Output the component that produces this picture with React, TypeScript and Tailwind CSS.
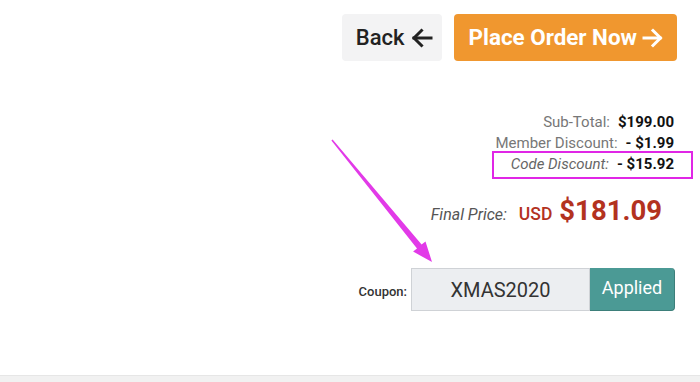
import React from "react";

function ArrowLeftIcon() {
  return (
    <svg width="22" height="20" viewBox="0 0 22 20" fill="none" stroke="currentColor" strokeWidth="3" strokeLinecap="square" strokeLinejoin="miter">
      <path d="M20 10H3" />
      <path d="M10.5 2.5L3 10l7.5 7.5" />
    </svg>
  );
}

function ArrowRightIcon() {
  return (
    <svg width="21" height="20" viewBox="0 0 21 20" fill="none" stroke="currentColor" strokeWidth="3" strokeLinecap="square" strokeLinejoin="miter">
      <path d="M2 10h16" />
      <path d="M11 2.5L18.5 10 11 17.5" />
    </svg>
  );
}

export default function App() {
  return (
    <div className="relative w-[700px] h-[382px] bg-white flex flex-col overflow-hidden" style={{ fontFamily: "Roboto, 'Liberation Sans', sans-serif" }}>
      {/* Buttons */}
      <div className="flex justify-end gap-3 pt-[14px] pr-[23px]">
        <button className="h-[47px] pl-[14px] pr-[9px] bg-[#f3f3f4] rounded-[4px] text-[22px] font-medium text-[#222] flex items-center gap-[6px]">
          <span>Back</span>
          <ArrowLeftIcon />
        </button>
        <button className="h-[47px] pl-[15px] pr-[14px] bg-[#f0972f] rounded-[4px] text-[22.4px] font-bold text-white flex items-center gap-[5px]">
          <span>Place Order Now</span>
          <ArrowRightIcon />
        </button>
      </div>

      {/* Summary */}
      <div className="mt-[51px] flex flex-col items-end pr-[26px] text-[15px] leading-[21px]">
        <div className="flex gap-2">
          <span className="text-[#777]">Sub-Total:</span>
          <span className="font-bold text-[#111]">$199.00</span>
        </div>
        <div className="flex gap-2">
          <span className="text-[#777]">Member Discount:</span>
          <span className="font-bold text-[#111]">- $1.99</span>
        </div>
        <div className="relative flex gap-2">
          <span className="italic text-[#666]">Code Discount:</span>
          <span className="font-bold text-[#111]">- $15.92</span>
          <div className="absolute left-[-19px] right-[-19px] top-[-3px] bottom-[-4px] border-2 border-[#e026e6]" />
        </div>
      </div>

      {/* Final price */}
      <div className="mt-[19px] flex justify-end items-baseline pr-[38px] leading-[34px]">
        <span className="italic text-[16px] text-[#555] mr-3">Final Price:</span>
        <span className="text-[17.5px] font-medium text-[#b3321f] mr-[7px]">USD</span>
        <span className="text-[27.5px] font-bold text-[#b3321f]">$181.09</span>
      </div>

      {/* Coupon */}
      <div className="mt-[36px] flex justify-end items-center pr-[25px]">
        <span className="text-[13px] font-medium text-[#333] mr-1 mt-[4px]">Coupon:</span>
        <div className="w-[179px] h-[43px] bg-[#eceef1] border border-[#cfd2d6] flex items-center justify-center text-[20px] text-[#333]">
          XMAS2020
        </div>
        <button className="w-[85px] h-[43px] bg-[#4b9a95] rounded-r-[4px] text-white text-[18px] pb-[4px] border-b border-r border-[#3d7f7a]">
          Applied
        </button>
      </div>

      {/* bottom band */}
      <div className="mt-auto h-[7px] bg-[#f1f1f1] border-t border-[#e6e6e6]" />

      {/* annotation arrow */}
      <svg className="absolute inset-0 pointer-events-none" width="700" height="382" viewBox="0 0 700 382">
        <polygon
          points="332.6,139.5 421.6,244.6 425.5,241.4 432,262 413.1,251.6 417,248.4 331.4,140.5"
          fill="#e23ae8"
        />
      </svg>
    </div>
  );
}
